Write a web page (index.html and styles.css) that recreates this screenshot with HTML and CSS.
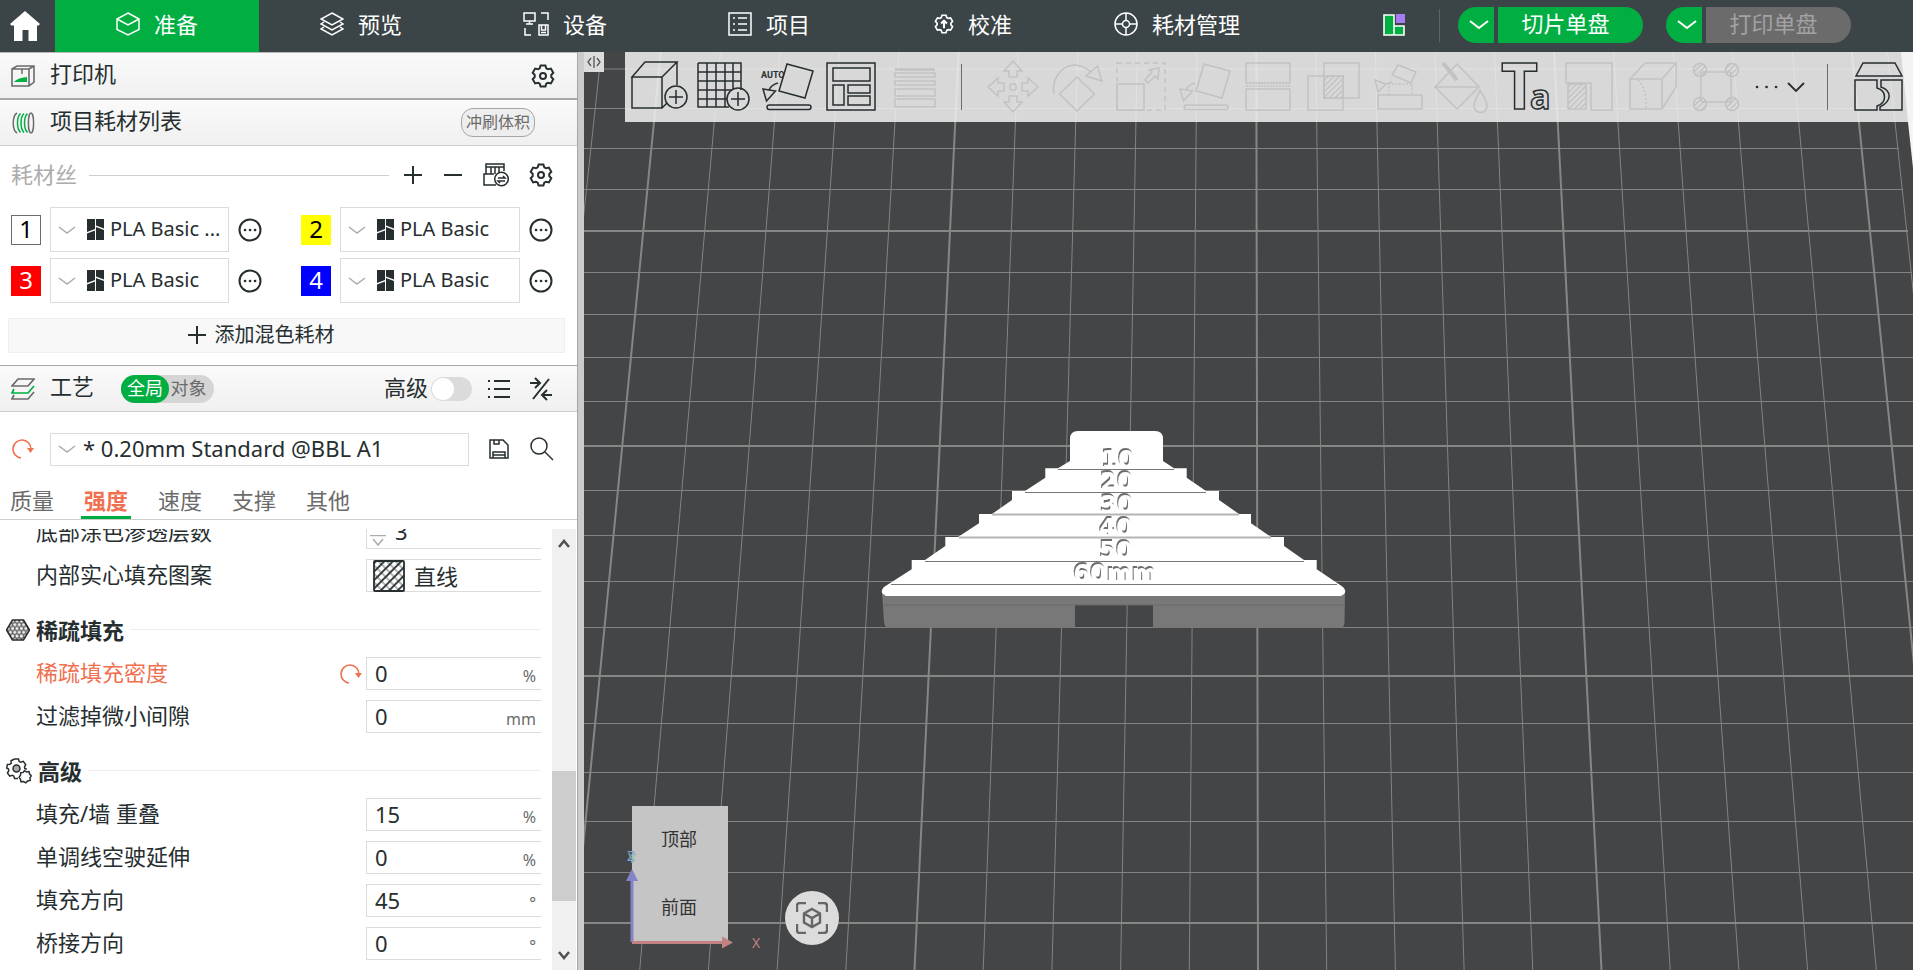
FILE: index.html
```html
<!DOCTYPE html>
<html lang="zh-CN">
<head>
<meta charset="utf-8">
<title>准备</title>
<link rel="stylesheet" href="styles.css">
</head>
<body>
<svg class="defs" aria-hidden="true">
  <defs>
    <symbol id="gear" viewBox="0 0 24 24"><path d="M9.600 1.500h4.800l.9 2.800 1.700 1 2.900-.7 2.400 4.200-2 2.100v2.200l2 2.100-2.400 4.200-2.900-.7-1.700 1-.9 2.800H9.600l-.9-2.800-1.700-1-2.900.7-2.400-4.200 2-2.100v-2.200l-2-2.100 2.400-4.200 2.900.7 1.700-1z"/><circle cx="12" cy="12" r="3"/></symbol>
    <symbol id="plus" viewBox="0 0 20 20"><path d="M10 1v18M1 10h18"/></symbol>
    <symbol id="caret" viewBox="0 0 18 10"><path d="M1 2l8 6 8-6"/></symbol>
    <symbol id="more" viewBox="0 0 24 24"><circle cx="12" cy="12" r="10.500"/><path d="M7 12h.1M12 12h.1M17 12h.1" stroke-width="2.600" stroke-linecap="round"/></symbol>
    <symbol id="brand" viewBox="0 0 17 21"><path d="M0 0h8v10L0 13zM0 14.500l8-3V21H0zM9 0h8v9.500L9 6.500zM9 8l8 3v10H9z"/></symbol>
    <symbol id="reset" viewBox="0 0 22 22"><path d="M9 20A9 9 0 1 1 19 11" fill="none" stroke="currentColor" stroke-width="1.600"/><path d="M15 10h7l-3.500 5z" fill="currentColor"/></symbol>
    <symbol id="tip" viewBox="0 0 64 70"><path d="M31 12l26 7-8 27-26-7zM22 31q-7 2-9 7M7 37l12.500 2-9 10z"/><rect x="11" y="53" width="44" height="4.500" rx="2.200"/></symbol>
    <pattern id="hatch" width="4" height="4" patternUnits="userSpaceOnUse" patternTransform="rotate(45)"><path d="M0 0v4" stroke="#bdbdbd" stroke-width="2"/></pattern>
    <pattern id="lattice" width="6" height="6" patternUnits="userSpaceOnUse" patternTransform="rotate(45)"><path d="M0 3h6" stroke="#8a8a8a" stroke-width="1.300"/><path d="M3 0v6" stroke="#262e30" stroke-width="1.800"/></pattern>
    <pattern id="cells" width="4.400" height="7.600" patternUnits="userSpaceOnUse"><path d="M0 0h4.400v7.600H0z" fill="#5c5c5c"/><g fill="#f2f2f2"><circle cx="2.200" cy="1.900" r="1.600"/><circle cx="0" cy="5.700" r="1.600"/><circle cx="4.400" cy="5.700" r="1.600"/></g></pattern>
  </defs>
</svg>

<header class="topbar">
  <button class="home" aria-label="主页"><svg viewBox="0 0 30 30" width="30" height="30"><path d="M15 0L30 13l-1.500 1.500H27V30h-8.500V19h-6v11H4V14.500H1.500L0 13z" fill="#fff"/></svg></button>
  <nav class="tabs">
    <a class="tab tab-on" href="#prepare"><svg class="tab-icon" viewBox="0 0 24 24"><path d="M12 1l11 6v10.500L12 23 1 17.500V7zM1 7l11 6 11-6"/></svg>准备</a>
    <a class="tab" href="#preview"><svg class="tab-icon" viewBox="0 0 24 24"><path d="M12 1l11 6-11 6L1 7zM4 10l-3 2 11 6 11-6-3-2M4 15l-3 2 11 6 11-6-3-2"/></svg>预览</a>
    <a class="tab" href="#device"><svg class="tab-icon tab-icon-wide" viewBox="0 0 26 24"><path d="M1 1h11v8H1zM6.500 9v3M3 12h7M18 1h7v7M2 16v7h6M16 13h9v10h-9zM18.500 13v5h4v-5M18 20.500h5"/></svg>设备</a>
    <a class="tab" href="#project"><svg class="tab-icon" viewBox="0 0 24 24"><path d="M1 1h22v22H1zM5 6h2M10 6h9M5 12h2M10 12h9M5 18h2M10 18h9"/></svg>项目</a>
    <a class="tab" href="#calibrate"><svg class="tab-icon tab-icon-small" viewBox="0 0 24 24"><path d="M9.600 1.500h4.800l.9 2.800 1.700 1 2.900-.7 2.400 4.200-2 2.100v2.200l2 2.100-2.400 4.200-2.900-.7-1.700 1-.9 2.800H9.600l-.9-2.800-1.700-1-2.900.7-2.400-4.200 2-2.100v-2.200l-2-2.100 2.400-4.200 2.900.7 1.700-1z" stroke-width="2"/><path d="M12 17v-7M8.500 11.500L12 8l3.500 3.500" stroke-width="2.500"/></svg>校准</a>
    <a class="tab" href="#filament"><svg class="tab-icon" viewBox="0 0 24 24"><circle cx="12" cy="12" r="11"/><circle cx="12" cy="12" r="3.500"/><path d="M12 1v7.500M12 15.500V23M1 12h7.500M15.500 12H23"/></svg>耗材管理</a>
  </nav>
  <div class="actions">
    <button class="plain" aria-label="布局"><svg viewBox="0 0 22 22" width="22" height="22"><path d="M1 1h10v20H1zM11 12h10v9H11z" fill="#00ae42" stroke="#fff" stroke-width="1.600"/><path d="M13 0h9v9h-9z" fill="#a77bf3"/></svg></button>
    <span class="top-divider"></span>
    <div class="split">
      <button class="split-caret" aria-label="切片选项"><svg viewBox="0 0 20 12" width="20" height="12"><path d="M1 2l9 7 9-7"/></svg></button>
      <button class="split-main">切片单盘</button>
    </div>
    <div class="split">
      <button class="split-caret" aria-label="打印选项"><svg viewBox="0 0 20 12" width="20" height="12"><path d="M1 2l9 7 9-7"/></svg></button>
      <button class="split-main split-off" disabled>打印单盘</button>
    </div>
  </div>
</header>

<main class="workspace">
  <aside class="panel">
    <section class="bar bar-printer">
      <svg class="bar-icon" viewBox="0 0 24 22"><path d="M1 4l5-3h17v16l-5 4H1zM1 4h17M18 4l5-3M18 4v17" fill="none" stroke="#6b6b6b" stroke-width="1.600"/><path d="M11 4v5" stroke="#6b6b6b" stroke-width="1.500"/><path d="M3 17q3-4 13-5v5z" fill="#00ae42"/></svg>
      <h2 class="bar-title">打印机</h2>
      <button class="icon-btn" aria-label="打印机设置"><svg class="line" width="24" height="24"><use href="#gear"/></svg></button>
    </section>
    <section class="bar bar-filament">
      <svg class="bar-icon" viewBox="0 0 24 22"><g fill="none" stroke-width="1.500"><path d="M6 1C1 4 1 18 6 21" stroke="#6b6b6b"/><path d="M9.500 1.500c-4 4-4 15 0 19M13 1.500c-4 4-4 15 0 19M16.500 1.500c-4 4-4 15 0 19" stroke="#00ae42"/><ellipse cx="20" cy="11" rx="2.600" ry="10" stroke="#6b6b6b"/></g></svg>
      <h2 class="bar-title">项目耗材列表</h2>
      <button class="pill">冲刷体积</button>
    </section>

    <section class="filaments">
      <div class="filament-head">
        <span class="filament-label">耗材丝</span>
        <span class="rule"></span>
        <button class="icon-btn" aria-label="添加"><svg class="line" width="20" height="20"><use href="#plus"/></svg></button>
        <button class="icon-btn" aria-label="删除"><svg class="line" width="20" height="20" viewBox="0 0 20 20"><path d="M1 10h18"/></svg></button>
        <button class="icon-btn" aria-label="同步"><svg class="line thin" width="26" height="24" viewBox="0 0 26 24"><path d="M3 1h18v3H3zM3 4v7M8 4v7M12 4v7M16 4v5M21 4v4M4 11H1v11h12M1 11h10"/><circle cx="18.500" cy="16" r="6.800"/><path d="M15 15h7l-2-2M22 18h-7l2 2"/></svg></button>
        <button class="icon-btn" aria-label="耗材设置"><svg class="line" width="24" height="24"><use href="#gear"/></svg></button>
      </div>
      <div class="filament-grid">
        <div class="filament">
          <button class="swatch swatch-white">1</button>
          <label class="combo combo-filament"><svg class="caret" width="18" height="10"><use href="#caret"/></svg><svg class="brand" width="17" height="21"><use href="#brand"/></svg><select aria-label="耗材 1"><option>PLA Basic ...</option></select></label>
          <button class="icon-btn" aria-label="更多"><svg class="line" width="24" height="24"><use href="#more"/></svg></button>
        </div>
        <div class="filament">
          <button class="swatch swatch-yellow">2</button>
          <label class="combo combo-filament"><svg class="caret" width="18" height="10"><use href="#caret"/></svg><svg class="brand" width="17" height="21"><use href="#brand"/></svg><select aria-label="耗材 2"><option>PLA Basic</option></select></label>
          <button class="icon-btn" aria-label="更多"><svg class="line" width="24" height="24"><use href="#more"/></svg></button>
        </div>
        <div class="filament">
          <button class="swatch swatch-red">3</button>
          <label class="combo combo-filament"><svg class="caret" width="18" height="10"><use href="#caret"/></svg><svg class="brand" width="17" height="21"><use href="#brand"/></svg><select aria-label="耗材 3"><option>PLA Basic</option></select></label>
          <button class="icon-btn" aria-label="更多"><svg class="line" width="24" height="24"><use href="#more"/></svg></button>
        </div>
        <div class="filament">
          <button class="swatch swatch-blue">4</button>
          <label class="combo combo-filament"><svg class="caret" width="18" height="10"><use href="#caret"/></svg><svg class="brand" width="17" height="21"><use href="#brand"/></svg><select aria-label="耗材 4"><option>PLA Basic</option></select></label>
          <button class="icon-btn" aria-label="更多"><svg class="line" width="24" height="24"><use href="#more"/></svg></button>
        </div>
      </div>
      <button class="add-mix"><svg class="line" width="20" height="20"><use href="#plus"/></svg>添加混色耗材</button>
    </section>

    <section class="bar bar-process">
      <svg class="bar-icon" viewBox="0 0 24 22"><g fill="none" stroke-width="1.700"><path d="M7 1h16l-6 7H1zM3 17l-2 4h16l6-7" stroke="#6b6b6b"/><path d="M3 11l-2 4h16l6-7" stroke="#00ae42"/></g></svg>
      <h2 class="bar-title">工艺</h2>
      <div class="scope"><button class="scope-on">全局</button><button class="scope-off">对象</button></div>
      <label class="advanced"><span>高级</span><input class="toggle" type="checkbox"></label>
      <button class="icon-btn" aria-label="列表"><svg class="line" width="22" height="22" viewBox="0 0 22 22"><path d="M0 3h2M6 3h16M0 11h2M6 11h16M0 19h2M6 19h16"/></svg></button>
      <button class="icon-btn" aria-label="比较"><svg class="line" width="24" height="24" viewBox="0 0 24 24"><path d="M4 22L20 2M1 6h9M6 1l5 5-5 5M23 18h-9M18 13l-5 5 5 5"/></svg></button>
    </section>

    <section class="preset">
      <button class="icon-btn reset" aria-label="重置"><svg width="22" height="22"><use href="#reset"/></svg></button>
      <label class="combo combo-preset"><svg class="caret" width="18" height="10"><use href="#caret"/></svg><select aria-label="工艺预设"><option>* 0.20mm Standard @BBL A1</option></select></label>
      <button class="icon-btn" aria-label="保存"><svg class="line thin" width="20" height="20" viewBox="0 0 20 20"><path d="M1 1h13l5 5v13H1zM5 1v4h5V1M4 19v-6h12v6M4 16h12"/></svg></button>
      <button class="icon-btn" aria-label="搜索"><svg class="line thin" width="24" height="24" viewBox="0 0 24 24"><circle cx="9" cy="9" r="8"/><path d="M15 15l8 8"/></svg></button>
    </section>

    <nav class="subtabs">
      <a class="subtab" href="#quality">质量</a>
      <a class="subtab subtab-on" href="#strength">强度</a>
      <a class="subtab" href="#speed">速度</a>
      <a class="subtab" href="#support">支撑</a>
      <a class="subtab" href="#others">其他</a>
    </nav>

    <section class="scroll">
      <form class="settings">
        <div class="row"><label for="f1">底部涂色渗透层数</label><div class="field field-spin"><svg class="caret" width="16" height="12" viewBox="0 0 16 12"><path d="M0 .5h16M3 4l5 6 5-6"/></svg><input id="f1" value="3"></div></div>
        <div class="row"><label for="f2">内部实心填充图案</label><div class="field field-pattern"><svg width="32" height="32" viewBox="0 0 32 32"><rect x="1" y="1" width="30" height="30" rx="1" fill="url(#lattice)" stroke="#262e30" stroke-width="1.800"/></svg><select id="f2"><option>直线</option></select></div></div>
        <h3 class="group"><svg width="24" height="22" viewBox="0 0 24 22"><path d="M6.500 1h11l6 10-6 10h-11l-6-10z" fill="url(#cells)" stroke="#262e30" stroke-width="1.600"/></svg>稀疏填充<span class="rule"></span></h3>
        <div class="row row-changed"><label for="f3">稀疏填充密度</label><button type="button" class="icon-btn reset" aria-label="重置"><svg width="22" height="22"><use href="#reset"/></svg></button><div class="field"><input id="f3" value="0"><span class="unit">%</span></div></div>
        <div class="row"><label for="f4">过滤掉微小间隙</label><div class="field"><input id="f4" value="0"><span class="unit">mm</span></div></div>
        <h3 class="group"><svg width="26" height="26" viewBox="0 0 26 26" fill="none" stroke="#262e30" stroke-width="1.500"><path d="M8.500 1h4l.7 2.500 1.600.8 2.400-1 2.500 3.200-1.200 2.300.3 1.700 2 .8M12 20.500H8.500L7.800 18l-1.600-.8-2.500 1L1.400 15l1.400-2.300-.3-1.700-1.800-1 .7-3.600 2.600-.1 1.200-1.200-.2-2.300L8.500 1M18.500 12.500l2 1.500 2.500-.4.600 2.500 1.700 1.700-1.300 2.100.2 2.600-2.600.5-1.800 1.800-2.300-1.300-2.600.2-.4-2.500-1.400-1.900 1.400-2.100.2-2.500 2.500-.3z"/><circle cx="10.500" cy="10.500" r="3.500" fill="#aaa"/></svg>高级<span class="rule"></span></h3>
        <div class="row"><label for="f5">填充/墙 重叠</label><div class="field"><input id="f5" value="15"><span class="unit">%</span></div></div>
        <div class="row"><label for="f6">单调线空驶延伸</label><div class="field"><input id="f6" value="0"><span class="unit">%</span></div></div>
        <div class="row"><label for="f7">填充方向</label><div class="field"><input id="f7" value="45"><span class="unit">°</span></div></div>
        <div class="row"><label for="f8">桥接方向</label><div class="field"><input id="f8" value="0"><span class="unit">°</span></div></div>
      </form>
      <div class="scrollbar" aria-hidden="true">
        <svg viewBox="0 0 12 10" width="12" height="10"><path d="M1 8l5-6 5 6"/></svg>
        <div class="track"><div class="thumb"></div></div>
        <svg viewBox="0 0 12 10" width="12" height="10"><path d="M1 2l5 6 5-6"/></svg>
      </div>
    </section>
  </aside>
  <div class="splitter"></div>

  <section class="viewport">
    <svg class="scene" viewBox="584 52 1329 918" preserveAspectRatio="xMidYMid slice">
      <rect x="584" y="52" width="1329" height="918" fill="#444546"/>
      <g fill="none" stroke="#838384" stroke-width="1">
        <path d="M584 69H1889M584 108.500H1894M584 148.500H1899M584 189.500H1903M584 272.500H1912M584 314.500H1913M584 357.500H1913M584 401.500H1913M584 490.500H1913M584 535.500H1913M584 581.500H1913M584 627.500H1913M584 723.500H1913M584 772.500H1913M584 821.500H1913M584 872.500H1913"/>
        <path d="M601.300 52L502.300 970M720.400 52L639.700 970M779.900 52L708.400 970M839.500 52L777.100 970M899 52L845.800 970M1018.100 52L983.200 970M1077.700 52L1051.900 970M1137.200 52L1120.600 970M1196.800 52L1189.300 970M1315.900 52L1326.700 970M1375.400 52L1395.400 970M1435 52L1464.100 970M1494.500 52L1532.800 970M1613.600 52L1670.200 970M1673.200 52L1738.900 970M1732.700 52L1807.600 970M1792.300 52L1876.300 970M1887.500 52L1986 970"/>
      </g>
      <g fill="none" stroke="#858686" stroke-width="2">
        <path d="M584 231H1908M584 446H1913M584 676H1913M584 923H1913"/>
        <path d="M660.800 52L571 970M958.600 52L914.500 970M1256.300 52L1258 970M1554.100 52L1601.500 970M1851.800 52L1945 970"/>
      </g>
      <path d="M1901 52h12v116l-5-46z" fill="#f4f4f4"/>
      <path d="M882 592L884 622q1 6 4 6H1075V605H1153V628H1340q4 0 4.500-5L1345 592z" fill="#787878"/>
      <path d="M883 605H1345" stroke="#6a6a6a"/>
      <path d="M1070 461V439q0-8 8-8h77q8 0 8 8v22l11 7.300h12.700V477.700L1206 491h13v9l20 14h12v9.300L1271 537h13v9l20 14h12.700v9.300L1343 587q4 4 1 7l-3 2H886l-3-2q-3-3 1-7l27.700-17.700V560H925l20.300-14v-9H958l21-13.700V514h13l20-14v-9h13l20.300-13.300v-9.400H1058z" fill="#fff"/>
      <path d="M1058 469.500H1174M1025 492.500H1206M925 561.500H1304M891 584.500H1337" stroke="#777" fill="none"/>
      <path d="M992 514.500H1239M959 537.500H1271" stroke="#b5b5b5" stroke-width="2" fill="none"/>
      <g class="engraved">
        <text x="1118" y="468">10</text><text x="1117" y="490">20</text><text x="1117" y="513">30</text><text x="1116" y="536">40</text><text x="1116" y="559">50</text><text x="1115" y="582">60mm</text>
      </g>
    </svg>

    <button class="collapse" aria-label="折叠侧栏"><svg viewBox="0 0 14 12" width="14" height="12"><path d="M7 0v12M4 2L1 6l3 4M10 2l3 4-3 4"/></svg></button>

    <div class="toolbar">
      <button class="tool" aria-label="添加模型"><svg viewBox="0 0 64 70"><path d="M4 25L17 10H49L34 25zM4 25V56H34V25M49 10V33M34 56l5-5"/><circle cx="48" cy="45" r="11"/><path d="M48 38v14M41 45h14"/></svg></button>
      <button class="tool" aria-label="添加盘"><svg viewBox="0 0 64 70"><path d="M6 11H49V38M6 11V55H37M6 20H49M6 29H49M6 38H40M6 47H35M15 11V55M24 11V55M33 11V55M41 11V37"/><circle cx="46" cy="47" r="11"/><path d="M46 40v14M39 47h14"/></svg></button>
      <button class="tool" aria-label="自动朝向"><svg viewBox="0 0 64 70"><use href="#tip"/><text class="auto-label" x="5" y="26">AUTO</text></svg></button>
      <button class="tool" aria-label="自动摆放"><svg viewBox="0 0 64 70"><path d="M7 11H55V58H7zM13 16H50V29H13zM13 33H24V53H13zM28 33H50V41H28zM28 44H50V53H28z"/></svg></button>
      <button class="tool tool-off" aria-label="可变层高" disabled><svg viewBox="0 0 64 70"><path d="M11 17.500H51" stroke-width="2.500"/><path d="M11 21H51V25H11zM11 29H51V33H11zM11 37H51V44H11zM11 47H51V55H11z"/></svg></button>
      <span class="tool-sep"></span>
      <button class="tool tool-off" aria-label="移动" disabled><svg viewBox="0 0 64 70"><path d="M32 9l9 10h-5v6h-8v-6h-5zM32 60l9-10h-5v-6h-8v6h-5zM7 35l10-9v5h6v8h-6v5zM57 35l-10-9v5h-6v8h6v5z"/><rect x="29" y="32" width="6" height="6" rx="1"/></svg></button>
      <button class="tool tool-off" aria-label="旋转" disabled><svg viewBox="0 0 64 70"><path d="M32 25L49.500 42 32 59 14.500 42zM9 42C5 20 28 3 46 20M52.500 14L57 29 41 24z"/></svg></button>
      <button class="tool tool-off" aria-label="缩放" disabled><svg viewBox="0 0 64 70"><path d="M8 11H56V58H8z" stroke-dasharray="5 4"/><path d="M8 32H35V58H8zM36 28l7-8-3-2 10-2-1 11-3-3-7 7z"/></svg></button>
      <button class="tool tool-off" aria-label="选择底面" disabled><svg viewBox="0 0 64 70"><use href="#tip"/></svg></button>
      <button class="tool tool-off" aria-label="切割" disabled><svg viewBox="0 0 64 70"><path d="M9 11H53V31H9zM9 37H53V58H9z"/><path d="M9 34H53" stroke-dasharray="2 1"/></svg></button>
      <button class="tool tool-off" aria-label="布尔运算" disabled><svg viewBox="0 0 64 70"><path d="M23 11H58V46H23zM7 24H42V58H7z"/><path d="M23 24H42V46H23z" fill="url(#hatch)"/></svg></button>
      <button class="tool tool-off" aria-label="支撑绘制" disabled><svg viewBox="0 0 64 70"><path d="M13 43H57V57H13zM33 13l18 7-5 11-19-8zM10 28l11 4-8 8zM21 32l6-2"/><path d="M24 43V32H47V43" stroke-dasharray="2 1.500"/></svg></button>
      <button class="tool tool-off" aria-label="涂色" disabled><svg viewBox="0 0 64 70"><path d="M28 12L50 35 28 57 6 35zM6 35H50M51 38c4 8 7 11 7 16a6.500 6.500 0 0 1-13 0c0-5 3-8 6-16z"/><path d="M14 11L28 28" stroke-width="4"/></svg></button>
      <button class="tool" aria-label="文字"><svg viewBox="0 0 64 70"><text class="glyph-big" x="8" y="57">T</text><text class="glyph-small" x="37" y="57">a</text></svg></button>
      <button class="tool tool-off" aria-label="接缝" disabled><svg viewBox="0 0 64 70"><path d="M9 11H55V58H34V31H9z"/><path d="M11 32H29V57H11z" fill="url(#hatch)"/></svg></button>
      <button class="tool tool-off" aria-label="SVG" disabled><svg viewBox="0 0 64 70"><path d="M9 27L24 11H55V35L41 57H9zM9 27H41L55 11M41 27V57"/><path d="M17 28q9 8 8 28" stroke-dasharray="2 2"/></svg></button>
      <button class="tool tool-off" aria-label="测量" disabled><svg viewBox="0 0 64 70"><rect x="16" y="20" width="30" height="30" rx="2"/><circle cx="15" cy="18" r="6.500" fill="url(#hatch)"/><circle cx="47" cy="18" r="6.500" fill="url(#hatch)"/><circle cx="15" cy="52" r="6.500" fill="url(#hatch)"/><circle cx="47" cy="52" r="6.500" fill="url(#hatch)"/></svg></button>
      <button class="tool" aria-label="更多工具"><svg viewBox="0 0 64 70"><path d="M8 35h.1M17.500 35h.1M27 35h.1" stroke-width="2.600" stroke-linecap="round"/><path d="M39 31l8 8 8-8" stroke-width="1.800"/></svg></button>
      <span class="tool-sep tool-sep-end"></span>
      <button class="tool" aria-label="装配"><svg viewBox="0 0 64 70"><path d="M14 11H46L53 24H7zM6 28H28V36c10 3 10 15 0 18V58H6zM32 28H53V58H31V55c12-6 12-16 1-20z"/></svg></button>
    </div>

    <svg class="navcube" viewBox="0 0 150 144" width="150" height="144">
      <rect x="7" y="0" width="96" height="136" fill="#c5c5c5"/>
      <text class="face" x="54" y="40">顶部</text>
      <text class="face" x="54" y="108">前面</text>
      <path d="M7 136V73" stroke="#8383c8" stroke-width="3"/><path d="M7 63l6 12H1z" fill="#8383c8"/>
      <path d="M7 136.500H98" stroke="#c38282" stroke-width="3"/><path d="M108 136.500l-11-6v12z" fill="#c38282"/>
      <text class="axis axis-z" x="2" y="55">Z</text><text class="axis axis-y" x="3" y="57">Y</text><text class="axis axis-x" x="131" y="142">X</text>
    </svg>
    <button class="focus" aria-label="视角"><svg viewBox="0 0 32 32" width="32" height="32"><path d="M1 10V4q0-3 3-3h6M22 1h6q3 0 3 3v6M31 22v6q0 3-3 3h-6M10 31H4q-3 0-3-3v-6M16 7l8 4.500v9L16 25l-8-4.500v-9zM8 11.500l8 4.500 8-4.500M16 16v9"/></svg></button>
  </section>
</main>
</body>
</html>
```
FILE: styles.css
```css
* { box-sizing: border-box; }
body {
  margin: 0;
  height: 100vh;
  display: flex;
  flex-direction: column;
  overflow: hidden;
  font-family: "Noto Sans", "Noto Sans CJK SC", sans-serif;
  font-size: 22px;
  line-height: 28px;
  color: #262e30;
  background: #fff;
}
button, input, select { font: inherit; color: inherit; margin: 0; padding: 0; border: 0; background: none; }
select { appearance: none; outline: 0; min-width: 0; flex: 1; }
a { color: inherit; text-decoration: none; }
h2, h3 { margin: 0; font-size: 22px; font-weight: 400; }
svg { flex: none; display: block; }
.defs { position: absolute; width: 0; height: 0; }
.line { fill: none; stroke: #262e30; stroke-width: 2; }
.thin { stroke-width: 1.5; }
.icon-btn { display: flex; flex: none; align-items: center; justify-content: center; }
.reset { color: #f07050; }
.rule { flex: 1; height: 1px; background: #cecece; }

.topbar { display: flex; height: 52px; flex: none; background: #3b4446; color: #fff; }
.home { width: 55px; display: flex; justify-content: center; align-items: center; padding-right: 5px; }
.tabs { display: flex; }
.tab { width: 204px; display: flex; align-items: center; justify-content: center; gap: 14px; padding-bottom: 4px; }
.tab-on { background: #00ae42; }
.tab-icon { width: 24px; height: 24px; fill: none; stroke: #fff; stroke-width: 1.5; }
.tab-icon-wide { width: 26px; }
.tab-icon-small { width: 20px; height: 20px; }
.actions { margin-left: auto; display: flex; align-items: center; padding: 0 62px 2px 0; }
.plain { display: flex; }
.top-divider { width: 1px; height: 33px; margin: 0 18px 0 34px; background: #5c6466; }
.split { display: flex; gap: 4px; height: 36px; }
.split + .split { margin-left: 23px; }
.split-caret { width: 36px; display: flex; align-items: center; justify-content: center; background: #00ae42; border-radius: 18px 0 0 18px; padding-left: 6px; }
.split-caret svg { fill: none; stroke: #fff; stroke-width: 2; }
.split-main { width: 145px; background: #00ae42; border-radius: 0 18px 18px 0; padding: 0 10px 4px 0; }
.split-off { background: #6b6b6b; color: #a2a2a2; }

.workspace { flex: 1; min-height: 0; display: flex; }
.panel { flex: 0 0 577px; display: flex; flex-direction: column; min-height: 0; }
.splitter { width: 7px; flex: none; background: #cbcbcc; border-left: 1px solid #a6a6a8; }

.bar { display: flex; align-items: center; flex: none; height: 46px; padding: 0 23px 0 11px; background: linear-gradient(#fafafa, #f0f0f0); border-bottom: 1px solid #cecece; }
.bar-printer { height: 48px; padding-right: 22px; border-top: 1px solid #b8b8b8; border-bottom: 2px solid #a6a6a6; }
.bar-filament { padding-right: 42px; }
.bar-icon { width: 24px; height: 22px; }
.bar-title { margin: 0 auto 0 15px; padding-bottom: 5px; }
.pill { height: 29px; width: 74px; font-size: 16px; line-height: 20px; padding-bottom: 2px; color: #6b6b6b; background: #eee; border: 1px solid #a6a6a6; border-radius: 12px; white-space: nowrap; }

.filaments { padding: 10px 12px 12px 8px; flex: none; }
.filament-head { display: flex; align-items: center; height: 38px; padding: 0 12px 0 3px; gap: 20px; }
.filament-label { color: #acacac; margin-right: -8px; padding-bottom: 2px; }
.filament-head .rule { margin-right: -6px; }
.filament-grid { display: grid; grid-template-columns: 251px 252px; column-gap: 39px; row-gap: 6px; margin: 13px 0 15px 3px; }
.filament { display: flex; align-items: center; gap: 9px; }
.swatch { width: 30px; height: 30px; flex: none; font-size: 24px; line-height: 28px; padding-bottom: 2px; color: #000; }
.swatch-white { border: 1px solid #6b6b6b; background: #fff; line-height: 26px; }
.swatch-yellow { background: #ff0; }
.swatch-red { background: #f00; color: #fff; }
.swatch-blue { background: #00f; color: #fff; }
.combo { display: flex; align-items: center; border: 1px solid #dbdbdb; background: #fff; min-width: 0; flex: 1; }
.combo select { padding-bottom: 2px; }
.caret { fill: none; stroke: #acacac; stroke-width: 1.5; }
.combo-filament { height: 45px; padding-left: 7px; font-size: 20px; }
.brand { fill: #262e30; margin: 0 6px 0 11px; }
.add-mix { width: 100%; height: 35px; display: flex; align-items: center; justify-content: center; gap: 8px; font-size: 20px; padding: 0 52px 2px 0; background: #f8f8f8; border: 1px solid #eee; }

.bar-process { border-top: 1px solid #a6a6a6; height: 47px; padding-right: 24px; }
.bar-process .bar-title { margin-right: 27px; }
.scope { display: flex; margin-right: auto; background: #d5d5d5; border-radius: 14px; height: 28px; font-size: 18px; line-height: 24px; color: #6b6b6b; }
.scope-on { width: 48px; border-radius: 14px; background: #00ae42; color: #fff; padding-bottom: 2px; }
.scope-off { width: 45px; padding: 0 6px 2px 0; }
.advanced { display: flex; align-items: center; gap: 3px; margin-right: 16px; }
.advanced span { padding-bottom: 4px; }
.toggle { appearance: none; width: 41px; height: 24px; border-radius: 12px; background: #dbdbdb; padding: 1px; }
.toggle::before { content: ""; display: block; width: 22px; height: 22px; border-radius: 50%; background: #fff; }
.bar-process .icon-btn + .icon-btn { margin-left: 19px; }

.preset { display: flex; align-items: center; flex: none; height: 74px; padding: 0 23px 0 12px; }
.combo-preset { height: 33px; margin: 0 20px 0 16px; padding-left: 7px; }
.combo-preset .caret { margin-right: 7px; }
.preset .icon-btn + .icon-btn { margin-left: 21px; }

.subtabs { display: flex; flex: none; height: 34px; padding-left: 7px; gap: 24px; border-bottom: 1px solid #cecece; color: #6b6b6b; }
.subtab { padding: 0 3px; border-bottom: 3px solid transparent; }
.subtab-on { color: #f07050; font-weight: 700; border-color: #00ae42; }

.scroll { flex: 1; min-height: 0; margin-top: 9px; display: flex; gap: 11px; overflow: hidden; }
.settings { flex: 1; margin-top: -13px; display: flex; flex-direction: column; gap: 10px; }
.row { display: flex; align-items: center; height: 33px; flex: none; padding-left: 36px; }
.row label { flex: 1; padding-bottom: 3px; }
.row-changed label { color: #f07050; }
.row .reset { margin-right: 4px; }
.field { width: 175px; height: 33px; display: flex; align-items: center; border: 1px solid #dbdbdb; border-right: 0; padding: 0 5px 0 8px; }
.field input { flex: 1; min-width: 0; width: 0; padding-bottom: 2px; }
.field-spin { padding: 16px 0 0 3px; }
.field-spin input { margin: -17px 0 0 9px; }
.field-pattern { padding-left: 6px; gap: 9px; }
.unit { font-size: 16px; line-height: 20px; color: #6b6b6b; padding-top: 4px; }
.group { display: flex; align-items: center; gap: 6px; height: 45px; flex: none; padding: 10px 0 0 6px; font-weight: 700; }
.group .rule { background: #eee; }
.scrollbar { width: 24px; margin-right: 1px; display: flex; flex-direction: column; align-items: center; gap: 10px; padding: 10px 0; background: #f0f0f0; }
.scrollbar svg { fill: none; stroke: #505050; stroke-width: 2.5; }
.track { flex: 1; width: 100%; display: flex; flex-direction: column; justify-content: flex-end; padding-bottom: 39px; }
.thumb { height: 38%; background: #cdcdcd; }

.viewport { flex: 1; position: relative; min-width: 0; overflow: hidden; background: #444546; }
.scene { position: absolute; inset: 0; width: 100%; height: 100%; }
.engraved { font-family: "DejaVu Sans", sans-serif; font-size: 24px; font-weight: 700; fill: #fff; text-anchor: middle; filter: drop-shadow(-1px -2px 0 #6e6e6e); }
.collapse { position: absolute; left: 0; top: 0; width: 20px; height: 20px; background: #dcdcdc; display: flex; align-items: center; justify-content: center; }
.collapse svg { fill: none; stroke: #555; stroke-width: 1.3; }
.toolbar { position: absolute; left: 41px; right: 0; top: 0; height: 70px; padding-left: 3px; display: flex; overflow: hidden; background: rgba(242, 242, 242, 0.85); }
.tool { flex: none; width: 64px; }
.tool svg { width: 64px; height: 70px; fill: none; stroke: #262e30; stroke-width: 1.5; }
.tool-off svg { stroke: #c2c2c2; }
.tool-sep { flex: none; width: 1px; height: 46px; margin: 12px 19px 0 13px; background: #6b6b6b; }
.tool-sep-end { margin: 12px 28px 0 14px; }
.tool-sep-end + .tool { margin-left: -7px; }
.auto-label { font-size: 9px; font-weight: 700; fill: #262e30; stroke: none; font-family: Roboto, sans-serif; }
.glyph-big { font-size: 64px; font-weight: 700; font-family: "Noto Sans", sans-serif; }
.glyph-small { font-size: 34px; font-weight: 700; font-family: "Noto Sans", sans-serif; }
.navcube { position: absolute; left: 41px; bottom: 20px; }
.face { font-size: 18px; text-anchor: middle; fill: #333; }
.axis { font-size: 14px; }
.axis-z { fill: #8f9fd0; }
.axis-y { fill: #7cc0a0; }
.axis-x { fill: #c38282; text-anchor: middle; }
.focus { position: absolute; left: 201px; bottom: 25px; width: 54px; height: 54px; border-radius: 50%; background: #dcdcdc; display: flex; align-items: center; justify-content: center; }
.focus svg { fill: none; stroke: #666; stroke-width: 2.4; }
```
